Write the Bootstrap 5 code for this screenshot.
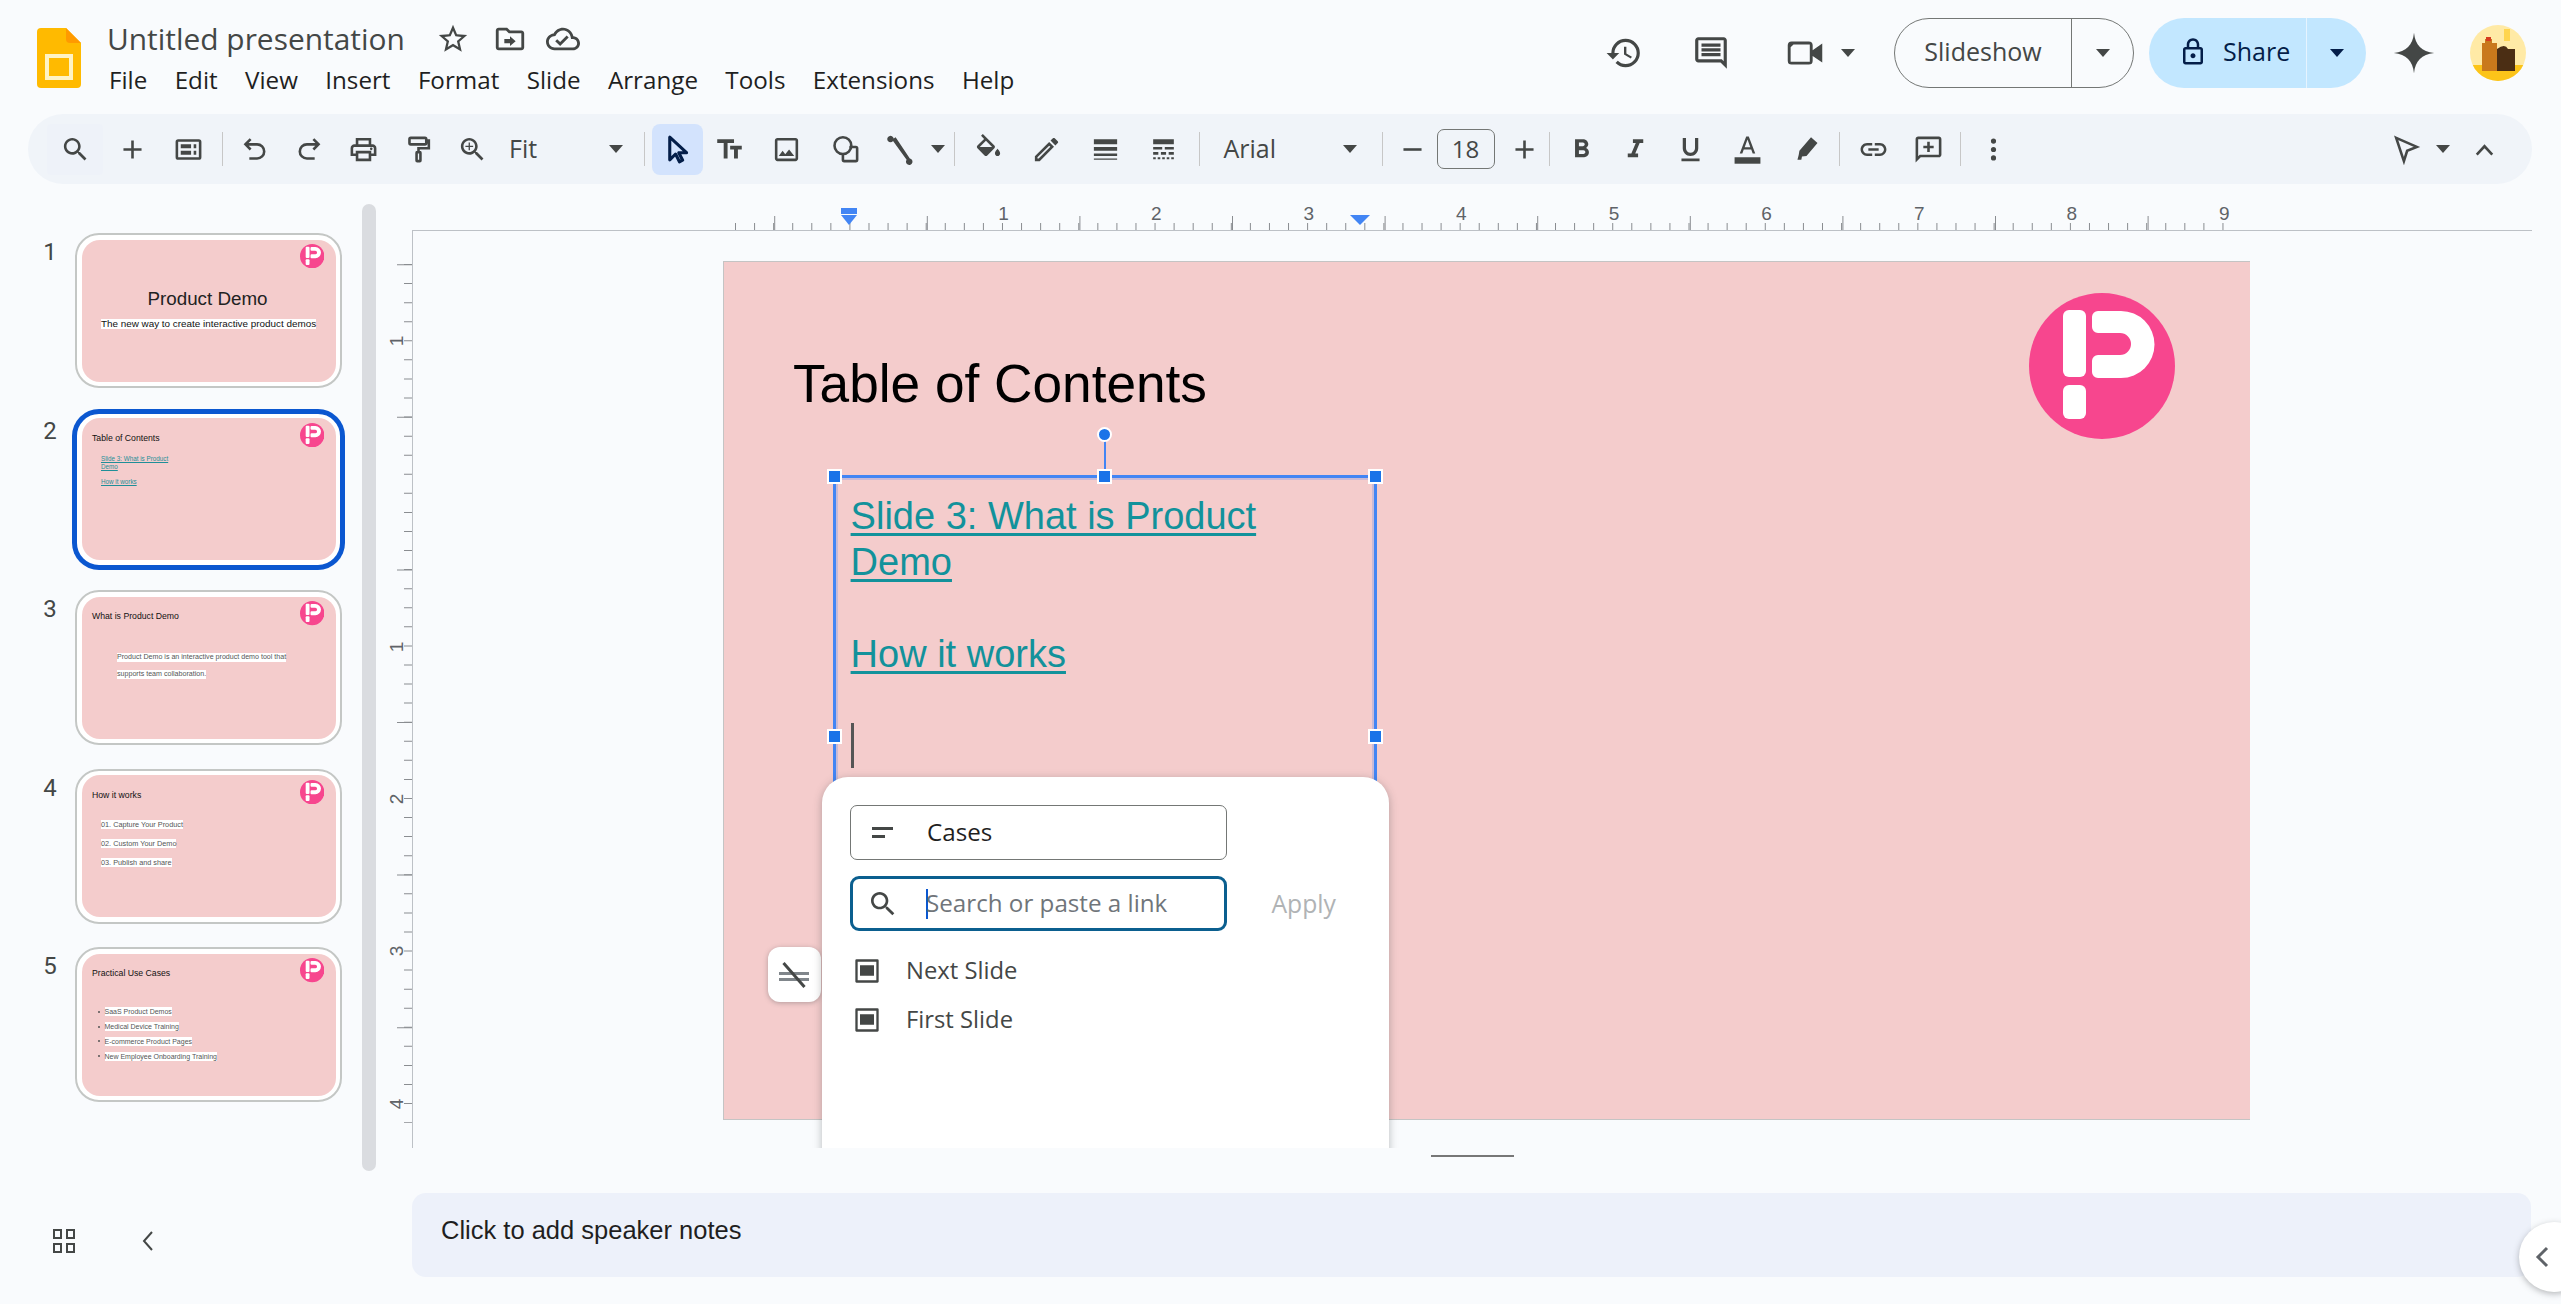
<!DOCTYPE html>
<html lang="en">
<head>
<meta charset="utf-8">
<title>Untitled presentation</title>
<link href="https://cdn.jsdelivr.net/npm/bootstrap@5.3.0/dist/css/bootstrap.min.css" rel="stylesheet">
<style>
html,body{margin:0;height:1306px;width:2561px;overflow:hidden;background:#fff;}
body{font-family:"Open Sans",Roboto,sans-serif;color:#1f1f1f;}
.app{width:2561px;height:1304px;background:#f9fbfd;overflow:hidden;}
svg{display:block;flex-shrink:0;}
.ic{fill:#444746;}

/* header */
.hdr{height:114px;padding:0 35px 0 37px;}
.doc-logo{width:44px;height:60px;margin-top:28px;}
.titles{margin-left:26px;padding-top:20px;}
.doc-title{font-size:29.9px;line-height:38px;color:#444746;width:328.5px;white-space:nowrap;}
.title-row .i-star{margin-right:23px;}
.title-row .i-fold{margin-right:19px;}
.menu{font-size:24.2px;line-height:32px;margin-top:6px;gap:27.4px;margin-left:2px;}
.hdr-r{padding-top:18px;}
.hbox{height:70px;}
.hicon{width:38px;height:38px;fill:#444746;}
.h-hist{margin-right:48.6px;}
.h-comm{margin-right:52px;}
.h-cam{width:46px;height:46px;margin-right:13px;}
.caret{width:14px;height:8px;fill:#444746;}
.caret-d{fill:#041e49;}
.slideshow{height:70px;width:240px;margin-left:39px;border:1.5px solid #747775;border-radius:35px;}
.slideshow .lbl{width:177px;height:100%;padding:0 0 3px;border:0;border-right:1.5px solid #747775;border-radius:0;font-size:25px;color:#444746;}
.slideshow .drop{flex:1;}
.share{height:70px;width:217px;margin-left:15px;background:#c2e7ff;border-radius:35px;}
.share .lbl{width:158px;height:100%;border:0;border-right:1.5px solid #e6f4ff;border-radius:0;padding:0 0 3px 29px;gap:15px;font-size:25px;color:#041e49;}
.share .drop{flex:1;}
.gem{width:44px;height:44px;margin-left:26px;fill:#444746;}
.avatar{width:56px;height:56px;margin-left:34px;border-radius:50%;overflow:hidden;}

/* toolbar */
.tbar{height:70px;margin:0 29px 0 28px;background:#f0f4f9;border-radius:35px;padding:0 24px 0 19px;}
.tb{height:51px;flex-shrink:0;}
.tb svg{width:31px;height:31px;fill:#444746;}
.tb svg.caret{width:14px;height:8px;}
.tb svg.line-ic{fill:none;stroke:#444746;stroke-width:2;}
.w26{width:26px}.w34{width:34px}.w40{width:40px}.w44{width:44px}.w48{width:48px}.w50{width:50px}.w51{width:51px}.w54{width:54px}.w54h{width:54.5px}.w56{width:56px}.w58{width:58px}.w60{width:60px}.w62{width:62px}
.tb-hov{background:#eef2f9;border-radius:4px;}
.tb-act{background:#d3e3fd;border-radius:8px;}
.tb-act svg{fill:none;stroke:#041e49;stroke-width:2.4;stroke-linejoin:round;}
.sep{width:1px;height:34px;background:#c7c7c7;flex-shrink:0;}
.m-a{margin:0 4.75px 0 6.75px;}
.m-b{margin:0 7px 0 6px;}
.m-c{margin:0 7px 0 3px;}
.m-d{margin:0 5px 0 5px;}
.m-e{margin:0 5.5px 0 5.5px;}
.m-f{margin:0 5px 0 2px;}
.m-g{margin:0 5px 0 2.5px;}
.m-h{margin:0 5px 0 4.5px;}
.tsel{height:51px;font-size:25px;color:#444746;flex-shrink:0;}
.tsel-fit{width:137.5px;padding:0 15px 0 9px;}
.tsel-font{width:172px;padding:0 20px 0 19px;}
.fsize{width:58px;height:40px;border:1.5px solid #747775;border-radius:7px;font-size:24px;color:#444746;flex-shrink:0;margin-right:8px;}

/* body columns */
.cols{height:1120px;}
.film{width:412px;flex-shrink:0;}
.film-top{height:987px;}
.strip{width:362px;padding-top:49px;}
.slide-row{height:178.6px;}
.num{width:75px;font-size:24px;line-height:30px;color:#444746;text-align:center;padding:4px 0 0 25px;flex-shrink:0;font-family:Roboto,sans-serif;}
.thumb{width:267px;height:155px;background:#fff;border:2px solid #c4c7c5;border-radius:24px;padding:4.5px;flex-shrink:0;}
.thumb.on{border-color:#0b57d0;box-shadow:0 0 0 3px #0b57d0;}
.mini{width:254px;height:142px;background:#f4cccc;border-radius:18px;overflow:hidden;font-family:"Liberation Sans",Arial,sans-serif;color:#111;}
.mini-logo{width:24.4px;height:24.4px;top:4.5px;right:11.5px;}
.m-title{font-size:8.7px;line-height:12px;}
.hl{background:#fff;color:#555;font-size:7.1px;line-height:9px;}
.mt1{padding-top:48px;text-align:center;}
.mt1 .big{font-size:18.8px;line-height:22px;color:#222;margin-right:2px;}
.mt1 .sub{font-size:9.9px;line-height:10.5px;background:#fff;color:#111;margin-top:9px;display:inline-block;}
.mt2{padding:13.5px 0 0 10.5px;}
.mt2 .links{padding:11px 0 0 9px;font-size:6.3px;line-height:8px;}
.mt2 .links a{color:#1e8f98;}
.mt2 .links p{margin:0 0 7px;}
.mt3{padding:13.5px 0 0 10.5px;}
.mt3 .para{padding:31px 0 0 25px;}
.mt3 .hl{display:table;margin-bottom:7.5px;}
.mt4{padding:13.5px 0 0 10.5px;}
.mt4 .rows{padding:19px 0 0 9px;}
.mt4 .hl{display:table;margin-bottom:10.2px;font-size:7.3px;}
.mt5{padding:13.5px 0 0 10.5px;}
.mt5 ul{list-style:none;padding:25px 0 0 5.5px;margin:0;}
.mt5 li{height:14.8px;display:flex;align-items:center;gap:5px;}
.mt5 li i{display:block;width:2px;height:2px;background:#555;border-radius:50%;}
.mt5 .hl{font-size:7px;}
.sbar{width:14px;height:967px;margin-top:20px;background:#dadce0;border-radius:7px;}
.film-foot{padding:57px 0 0 52px;}
.gridi{width:24px;height:26px;fill:#444746;}
.backi{width:16px;height:26px;margin-left:64px;fill:none;stroke:#444746;stroke-width:2;}

/* workspace */
.work{width:2149px;}
.hruler{height:46px;}
.vruler{left:-32px;top:46px;}
.canvas{width:2120px;height:918px;border-top:1.5px solid #bdc1c6;border-left:1.5px solid #bdc1c6;overflow:hidden;padding:30px 0 0 310px;}
.slide{width:1526.5px;height:859px;background:#f4cccc;border:1px solid #c4c4c4;border-right:0;border-bottom:1.5px solid #c4c4c4;font-family:"Liberation Sans",Arial,sans-serif;}
.big-logo{left:1304.5px;top:31px;width:146px;height:146px;}
.sl-title{left:69px;top:92px;font-size:53.2px;line-height:60px;color:#000;white-space:nowrap;}
.tbox{left:109px;top:213px;width:543.5px;height:520px;border:3px solid #4285f4;outline:2px solid rgba(66,133,244,.25);outline-offset:-5px;padding:15px 14.6px;font-size:38px;line-height:46px;}
.tbox p{margin:0;min-height:46px;}
.tbox a{color:#12929b;text-decoration-thickness:3px;text-underline-offset:4px;}
.caret-bar{display:block;width:3px;height:45px;background:#555;}
.hd{width:15px;height:15px;background:#1a73e8;border:2px solid #fff;}
.hd-tl{left:-9px;top:-9px;}
.hd-tm{left:260.5px;top:-9px;}
.hd-tr{right:-9px;top:-9px;}
.hd-ml{left:-9px;top:251px;}
.hd-mr{right:-9px;top:251px;}
.rot{left:260.5px;top:-51px;width:15px;height:15px;border-radius:50%;background:#1a73e8;border:2px solid #fff;}
.rot-line{left:267.5px;top:-37px;width:2px;height:31px;background:#4285f4;}
.popup{left:97.5px;top:515px;width:567px;height:500px;background:#fff;border-radius:26px;box-shadow:0 2px 9px rgba(60,64,67,.35);padding:28px 0 0 28.5px;font-family:"Open Sans",Roboto,sans-serif;}
.fld{width:376.5px;height:55px;border:1px solid #747775;border-radius:7px;background:#fff;padding:0;font-size:24.2px;color:#1f1f1f;}
.fld-ic{width:62px;margin-right:14px;flex-shrink:0;}
.fld-f{border:3px solid #0b5f8f;border-radius:9px;}
.fld-f .fld-ic{width:59px;}
.fld-f .ph{color:#70757a;}
.tcaret{display:block;width:2px;height:30px;background:#0b57d0;margin-right:-2px;}
.apply{font-size:24.7px;color:#b0b3b5;margin-left:45px;}
.link-list{margin:15px 0 0 3px;}
.link-list .list-group-item{border:0;background:transparent;padding:0;height:49px;gap:25px;font-size:23.8px;color:#444746;}
.float-btn{left:43.5px;top:685px;width:53px;height:55px;background:#fff;border-radius:12px;box-shadow:0 1px 5px rgba(60,64,67,.35);}
.drag{width:83px;height:2px;background:#777;margin:7px 0 0 1019px;}
.notes{width:2119px;height:84px;margin-top:36px;background:#edf1fa;border-radius:14px;padding:0 0 10px 29px;font-family:"Liberation Sans",Arial,sans-serif;font-size:25.5px;color:#1f1f1f;}
.side-btn{left:2519px;top:1222px;width:70px;height:70px;background:#fff;border-radius:50%;box-shadow:0 2px 6px rgba(60,64,67,.35);padding-left:14px;}
</style>
</head>
<body>
<svg width="0" height="0" class="position-absolute">
  <symbol id="plogo" viewBox="0 0 146 146">
    <circle cx="73" cy="73" r="73" fill="#f7468e"/>
    <rect x="34" y="17" width="23" height="67" rx="6" fill="#fff"/>
    <rect x="34" y="92" width="23" height="34" rx="6" fill="#fff"/>
    <path fill="#fff" d="M69 18H92A33.500 33.500 0 0 1 92 85H69a6 6 0 0 1-6-6V68a6 6 0 0 1 6-6H91a11 11 0 0 0 0-22H69a6 6 0 0 1-6-6V24a6 6 0 0 1 6-6Z"/>
  </symbol>
  <symbol id="sl" viewBox="0 0 24 24"><path fill-rule="evenodd" d="M3 2h18a1 1 0 0 1 1 1v18a1 1 0 0 1-1 1H3a1 1 0 0 1-1-1V3a1 1 0 0 1 1-1Zm1 2v16h16V4Zm2 3h12v9H6Z"/></symbol>
  <symbol id="car" viewBox="0 0 14 8"><path d="M0 0h14L7 8Z"/></symbol>
  <symbol id="srch" viewBox="0 0 24 24"><path d="M15.500 14h-.79l-.28-.27C15.410 12.590 16 11.110 16 9.500 16 5.910 13.090 3 9.500 3S3 5.910 3 9.500 5.910 16 9.500 16c1.610 0 3.090-.59 4.230-1.570l.27.28v.79l5 4.990L20.490 19l-4.990-5zm-6 0C7.010 14 5 11.990 5 9.500S7.010 5 9.500 5 14 7.010 14 9.500 11.990 14 9.500 14z"/></symbol>
</svg>
<div class="app position-relative">
  <!-- header -->
  <header class="hdr d-flex">
    <svg class="doc-logo" viewBox="0 0 44 60"><path d="M4 0H29L44 15V56a4 4 0 0 1-4 4H4a4 4 0 0 1-4-4V4a4 4 0 0 1 4-4Z" fill="#ffba00"/><path d="M29 0 44 15H33a4 4 0 0 1-4-4Z" fill="#ff9a00"/><path fill-rule="evenodd" d="M8 26H36V52H8Zm4 4V48H32V30Z" fill="#fff3c4"/></svg>
    <div class="titles">
      <div class="title-row d-flex align-items-center">
        <div class="doc-title">Untitled presentation</div>
        <svg class="i-star ic" width="34" height="34" viewBox="0 0 24 24"><path d="M22 9.240l-7.190-.62L12 2 9.190 8.630 2 9.240l5.460 4.730L5.820 21 12 17.270 18.180 21l-1.630-7.030L22 9.240zM12 15.400l-3.760 2.270 1-4.280-3.320-2.880 4.380-.38L12 6.100l1.710 4.040 4.380.38-3.320 2.880 1 4.280L12 15.400z"/></svg>
        <svg class="i-fold ic" width="34" height="34" viewBox="0 0 24 24"><path d="M20 6h-8l-2-2H4c-1.100 0-2 .9-2 2v12c0 1.100.9 2 2 2h16c1.100 0 2-.9 2-2V8c0-1.100-.9-2-2-2zm0 12H4V6h5.170l2 2H20v10zm-8-1 4-3.500-4-3.500v2H8v3h4z"/></svg>
        <svg class="ic" width="34" height="34" viewBox="0 0 24 24"><path d="M19.350 10.040C18.670 6.590 15.640 4 12 4 9.110 4 6.600 5.640 5.350 8.040 2.340 8.360 0 10.910 0 14c0 3.310 2.690 6 6 6h13c2.760 0 5-2.240 5-5 0-2.640-2.050-4.780-4.650-4.960zM19 18H6c-2.210 0-4-1.790-4-4 0-2.050 1.530-3.760 3.560-3.970l1.070-.11.500-.95C8.080 7.140 9.940 6 12 6c2.620 0 4.880 1.860 5.390 4.430l.30 1.500 1.530.11c1.560.10 2.780 1.410 2.780 2.960 0 1.650-1.350 3-3 3zm-9-3.820l-2.090-2.090L6.500 13.500 10 17l6.010-6.010-1.410-1.410z"/></svg>
      </div>
      <nav class="menu d-flex"><span>File</span><span>Edit</span><span>View</span><span>Insert</span><span>Format</span><span>Slide</span><span>Arrange</span><span>Tools</span><span>Extensions</span><span>Help</span></nav>
    </div>
    <div class="hdr-r ms-auto d-flex align-items-start">
      <div class="hbox d-flex align-items-center">
        <svg class="hicon h-hist" viewBox="0 0 24 24"><path d="M13 3a9 9 0 0 0-9 9H1l3.890 3.890.07.14L9 12H6c0-3.870 3.130-7 7-7s7 3.130 7 7-3.130 7-7 7c-1.930 0-3.680-.79-4.940-2.060l-1.420 1.420A8.954 8.954 0 0 0 13 21a9 9 0 0 0 0-18zm-1 5v5l4.280 2.540.72-1.210-3.500-2.080V8H12z"/></svg>
        <svg class="hicon h-comm" viewBox="0 0 24 24"><path d="M21.990 4c0-1.100-.89-2-1.990-2H4c-1.100 0-2 .9-2 2v12c0 1.100.9 2 2 2h14l4 4-.01-18zM20 4v13.170L18.830 16H4V4h16zM6 12h12v2H6zm0-3h12v2H6zm0-3h12v2H6z"/></svg>
        <svg class="hicon h-cam" viewBox="0 0 24 24"><path d="M5 6h9a2 2 0 0 1 2 2v2.500L21 7v10l-5-3.500V16a2 2 0 0 1-2 2H5a2 2 0 0 1-2-2V8a2 2 0 0 1 2-2Zm1 1.500L4.500 9v7.500H14.500V7.500Z" fill-rule="evenodd"/></svg>
        <svg class="caret"><use href="#car"/></svg>
      </div>
      <div class="slideshow d-flex">
        <button class="btn lbl">Slideshow</button>
        <span class="drop d-flex align-items-center justify-content-center"><svg class="caret"><use href="#car"/></svg></span>
      </div>
      <div class="share d-flex">
        <button class="btn lbl d-flex align-items-center">
          <svg width="30" height="30" viewBox="0 0 24 24" fill="#041e49"><path d="M18 8h-1V6c0-2.760-2.240-5-5-5S7 3.240 7 6v2H6c-1.100 0-2 .9-2 2v10c0 1.100.9 2 2 2h12c1.100 0 2-.9 2-2V10c0-1.100-.9-2-2-2zM9 6c0-1.660 1.340-3 3-3s3 1.340 3 3v2H9V6zm9 14H6V10h12v10zm-6-3c1.100 0 2-.9 2-2s-.9-2-2-2-2 .9-2 2 .9 2 2 2z"/></svg>
          Share
        </button>
        <span class="drop d-flex align-items-center justify-content-center"><svg class="caret caret-d"><use href="#car"/></svg></span>
      </div>
      <div class="hbox d-flex align-items-center">
        <svg class="gem" viewBox="0 0 24 24"><path d="M12 1C12.700 7.800 16.200 11.300 23 12 16.200 12.700 12.700 16.200 12 23 11.300 16.200 7.800 12.700 1 12 7.800 11.300 11.300 7.800 12 1Z"/></svg>
        <svg class="avatar" viewBox="0 0 56 56"><rect width="56" height="56" fill="#ffeaa6"/><rect y="40" width="56" height="16" fill="#fcc419"/><rect x="34" y="4" width="6" height="12" fill="#ffd54f"/><path d="M12 46V18h3v-4h7v4h5V46Z" fill="#c9791c"/><path d="M27 46V24q8-6 11 0h7v22Z" fill="#4b2e14"/><rect x="16" y="12" width="5" height="4" fill="#d63b1f"/></svg>
      </div>
    </div>
  </header>

  <!-- toolbar -->
  <div class="tbar d-flex align-items-center">
    <span class="tb w56 tb-hov d-flex align-items-center justify-content-center"><svg viewBox="0 0 24 24"><use href="#srch"/></svg></span>
    <span class="tb w58 d-flex align-items-center justify-content-center"><svg viewBox="0 0 24 24"><path d="M19 13h-6v6h-2v-6H5v-2h6V5h2v6h6v2z"/></svg></span>
    <span class="tb w54 d-flex align-items-center justify-content-center"><svg viewBox="0 0 24 24"><path fill-rule="evenodd" d="M4 4h16a2 2 0 0 1 2 2v12a2 2 0 0 1-2 2H4a2 2 0 0 1-2-2V6a2 2 0 0 1 2-2Zm0 2v12h16V6Zm2 2h8v3H6Zm0 5h8v3H6Zm10-5h2v3h-2Zm0 5h2v3h-2Z"/></svg></span>
    <span class="sep m-a"></span>
    <span class="tb w54h d-flex align-items-center justify-content-center"><svg class="line-ic" viewBox="0 0 24 24"><path d="M9 4 5 8l4 4M5 8h9a5.500 5.500 0 0 1 0 11H8"/></svg></span>
    <span class="tb w54h d-flex align-items-center justify-content-center"><svg class="line-ic" viewBox="0 0 24 24"><path d="m15 4 4 4-4 4M19 8h-9a5.500 5.500 0 0 0 0 11h6"/></svg></span>
    <span class="tb w54h d-flex align-items-center justify-content-center"><svg viewBox="0 0 24 24"><path d="M19 8h-1V3H6v5H5c-1.660 0-3 1.340-3 3v6h4v4h12v-4h4v-6c0-1.660-1.340-3-3-3zM8 5h8v3H8V5zm8 12v2H8v-4h8v2zm2-2v-2H6v2H4v-4c0-.55.45-1 1-1h14c.55 0 1 .45 1 1v4h-2z"/><circle cx="18" cy="11.500" r="1"/></svg></span>
    <span class="tb w54h d-flex align-items-center justify-content-center"><svg class="line-ic" viewBox="0 0 24 24"><path d="M6 3h11a1 1 0 0 1 1 1v3a1 1 0 0 1-1 1H6a1 1 0 0 1-1-1V4a1 1 0 0 1 1-1Zm12 2h2v6h-8v3M11 14h2a.5.5 0 0 1 .5.5v6a.5.5 0 0 1-.5.5h-2a.5.5 0 0 1-.5-.5v-6a.5.5 0 0 1 .5-.5Z"/></svg></span>
    <span class="tb w54h d-flex align-items-center justify-content-center"><svg viewBox="0 0 24 24"><use href="#srch"/><path d="M12.500 10H10v2.500H9V10H6.500V9H9V6.500h1V9h2.500z"/></svg></span>
    <span class="tsel tsel-fit d-flex align-items-center justify-content-between"><span>Fit</span><svg class="caret"><use href="#car"/></svg></span>
    <span class="sep m-b"></span>
    <span class="tb w51 tb-act d-flex align-items-center justify-content-center"><svg viewBox="0 0 24 24"><path d="M6 2.500V20L10.500 15.500 13.500 21.500 16 20.300 13 14.500H19Z"/></svg></span>
    <span class="tb w54 d-flex align-items-center justify-content-center"><svg viewBox="0 0 24 24"><path d="M2.500 4v3h5v12h3V7h5V4h-13zm19 5h-9v3h3v7h3v-7h3V9z"/></svg></span>
    <span class="tb w60 d-flex align-items-center justify-content-center"><svg viewBox="0 0 24 24"><path d="M19 3H5c-1.100 0-2 .9-2 2v14c0 1.100.9 2 2 2h14c1.100 0 2-.9 2-2V5c0-1.100-.9-2-2-2zm0 16H5V5h14v14zm-5-7-3 3.720L9 13l-3 4h12l-4-5z"/></svg></span>
    <span class="tb w58 d-flex align-items-center justify-content-center"><svg class="line-ic" viewBox="0 0 24 24"><circle cx="10" cy="9" r="6.500"/><path d="M15 10h5a1 1 0 0 1 1 1v9a1 1 0 0 1-1 1h-9a1 1 0 0 1-1-1v-5"/></svg></span>
    <span class="tb w50 d-flex align-items-center justify-content-center"><svg viewBox="0 0 24 24"><path d="m7.500 3.500 1.500-1L20 19a2.500 2.500 0 1 1-2.500 1L7 5.500a2.500 2.500 0 1 1 .5-2Z"/></svg></span>
    <span class="tb w26 d-flex align-items-center justify-content-center"><svg class="caret"><use href="#car"/></svg></span>
    <span class="sep m-c"></span>
    <span class="tb w54 d-flex align-items-center justify-content-center"><svg viewBox="0 0 24 24"><path d="M16.560 8.940 7.620 0 6.210 1.410l2.380 2.380-5.150 5.150c-.59.59-.59 1.540 0 2.120l5.500 5.500c.29.29.68.44 1.060.44s.77-.15 1.060-.44l5.500-5.500c.59-.58.59-1.530 0-2.120zM5.210 10 10 5.210 14.790 10H5.210zM19 11.500s-2 2.170-2 3.500c0 1.100.9 2 2 2s2-.9 2-2c0-1.330-2-3.500-2-3.500z"/></svg></span>
    <span class="tb w62 d-flex align-items-center justify-content-center"><svg viewBox="0 0 24 24"><path d="M14.060 9.020l.92.92L5.920 19H5v-.92l9.060-9.060M17.660 3c-.25 0-.51.1-.7.29l-1.830 1.830 3.750 3.750 1.830-1.830c.39-.39.39-1.020 0-1.410l-2.340-2.340c-.2-.2-.45-.29-.71-.29zm-3.600 3.190L3 17.250V21h3.750L17.810 9.940l-3.750-3.750z"/></svg></span>
    <span class="tb w56 d-flex align-items-center justify-content-center"><svg viewBox="0 0 24 24"><path d="M3 17h18v-2H3v2zm0 3h18v-1H3v1zm0-7h18v-3H3v3zm0-9v4h18V4H3z"/></svg></span>
    <span class="tb w60 d-flex align-items-center justify-content-center"><svg viewBox="0 0 24 24"><path d="M4 4h16v4H4Zm0 6h7v2H4Zm9 0h7v2h-7ZM4 14h4v2H4Zm6 0h4v2h-4Zm6 0h4v2h-4ZM4 18h2v1.500H4Zm3.500 0h2v1.500h-2Zm3.500 0h2v1.500h-2Zm3.500 0h2v1.500h-2Zm3.500 0h2v1.500h-2Z"/></svg></span>
    <span class="sep m-d"></span>
    <span class="tsel tsel-font d-flex align-items-center justify-content-between"><span>Arial</span><svg class="caret"><use href="#car"/></svg></span>
    <span class="sep m-e"></span>
    <span class="tb w48 d-flex align-items-center justify-content-center"><svg viewBox="0 0 24 24"><path d="M19 13H5v-2h14v2z"/></svg></span>
    <span class="fsize d-flex align-items-center justify-content-center">18</span>
    <span class="tb w44 d-flex align-items-center justify-content-center"><svg viewBox="0 0 24 24"><path d="M19 13h-6v6h-2v-6H5v-2h6V5h2v6h6v2z"/></svg></span>
    <span class="sep m-f"></span>
    <span class="tb w54 d-flex align-items-center justify-content-center"><svg viewBox="0 0 24 24"><path d="M15.600 10.790c.97-.67 1.650-1.770 1.650-2.790 0-2.260-1.750-4-4-4H7v14h7.040c2.090 0 3.710-1.700 3.710-3.790 0-1.520-.86-2.820-2.150-3.420zM10 6.500h3c.83 0 1.500.67 1.500 1.500s-.67 1.500-1.500 1.500h-3v-3zm3.500 9H10v-3h3.500c.83 0 1.500.67 1.500 1.500s-.67 1.500-1.500 1.500z"/></svg></span>
    <span class="tb w54 d-flex align-items-center justify-content-center"><svg viewBox="0 0 24 24"><path d="M10 4v3h2.210l-3.420 8H6v3h8v-3h-2.210l3.420-8H18V4z"/></svg></span>
    <span class="tb w56 d-flex align-items-center justify-content-center"><svg viewBox="0 0 24 24"><path d="M12 17c3.310 0 6-2.690 6-6V3h-2.500v8c0 1.930-1.570 3.500-3.500 3.500S8.500 12.930 8.500 11V3H6v8c0 3.310 2.690 6 6 6zm-7 2v2h14v-2H5z"/></svg></span>
    <span class="tb w58 d-flex align-items-center justify-content-center"><svg viewBox="0 0 24 24"><path d="M11 2 6 15h2l1.100-3h5.800l1.100 3h2L13 2h-2zm-1.200 8.200L12 4.200l2.200 6H9.800z"/><rect x="2" y="18" width="20" height="5"/></svg></span>
    <span class="tb w60 d-flex align-items-center justify-content-center"><svg viewBox="0 0 24 24"><path d="M15.500 2.500 20.500 7 12 17l-3.500.5L8 20H5l1-4 .5-3Z"/></svg></span>
    <span class="sep m-g"></span>
    <span class="tb w56 d-flex align-items-center justify-content-center"><svg viewBox="0 0 24 24"><path d="M3.900 12c0-1.710 1.390-3.100 3.100-3.100h4V7H7c-2.760 0-5 2.240-5 5s2.240 5 5 5h4v-1.900H7c-1.710 0-3.100-1.390-3.100-3.100zM8 13h8v-2H8v2zm9-6h-4v1.900h4c1.710 0 3.100 1.390 3.100 3.100s-1.390 3.100-3.100 3.100h-4V17h4c2.760 0 5-2.240 5-5s-2.240-5-5-5z"/></svg></span>
    <span class="tb w54 d-flex align-items-center justify-content-center"><svg viewBox="0 0 24 24"><path d="M20 2H4c-1.100 0-2 .9-2 2v18l4-4h14c1.100 0 2-.9 2-2V4c0-1.100-.9-2-2-2zm0 14H5.170L4 17.170V4h16v12z"/><path d="M13 6h-2v3H8v2h3v3h2v-3h3V9h-3z"/></svg></span>
    <span class="sep m-h"></span>
    <span class="tb w56 d-flex align-items-center justify-content-center"><svg viewBox="0 0 24 24"><circle cx="12" cy="5.500" r="2"/><circle cx="12" cy="12" r="2"/><circle cx="12" cy="18.500" r="2"/></svg></span>
    <span class="tb w40 ms-auto d-flex align-items-center justify-content-center"><svg class="line-ic" viewBox="0 0 24 24"><path d="M4 3 20 10 12.500 13 10 21Z"/></svg></span>
    <span class="tb w34 d-flex align-items-center justify-content-center"><svg class="caret"><use href="#car"/></svg></span>
    <span class="tb w48 d-flex align-items-center justify-content-center"><svg class="line-ic" viewBox="0 0 24 24"><path d="M6 16 12 9.500 18 16"/></svg></span>
  </div>

  <div class="cols d-flex">
    <!-- filmstrip -->
    <aside class="film">
      <div class="film-top d-flex">
        <div class="strip">
          <div class="slide-row d-flex">
            <div class="num">1</div>
            <div class="thumb"><div class="mini position-relative mt1">
              <svg class="mini-logo position-absolute"><use href="#plogo"/></svg>
              <div class="big">Product Demo</div>
              <span class="sub">The new way to create interactive product demos</span>
            </div></div>
          </div>
          <div class="slide-row d-flex">
            <div class="num">2</div>
            <div class="thumb on"><div class="mini position-relative mt2">
              <svg class="mini-logo position-absolute"><use href="#plogo"/></svg>
              <div class="m-title">Table of Contents</div>
              <div class="links"><p><a href="#">Slide 3: What is Product<br>Demo</a></p><p><a href="#">How it works</a></p></div>
            </div></div>
          </div>
          <div class="slide-row d-flex">
            <div class="num">3</div>
            <div class="thumb"><div class="mini position-relative mt3">
              <svg class="mini-logo position-absolute"><use href="#plogo"/></svg>
              <div class="m-title">What is Product Demo</div>
              <div class="para"><span class="hl">Product Demo is an interactive product demo tool that</span><span class="hl">supports team collaboration.</span></div>
            </div></div>
          </div>
          <div class="slide-row d-flex">
            <div class="num">4</div>
            <div class="thumb"><div class="mini position-relative mt4">
              <svg class="mini-logo position-absolute"><use href="#plogo"/></svg>
              <div class="m-title">How it works</div>
              <div class="rows"><span class="hl">01. Capture Your Product</span><span class="hl">02. Custom Your Demo</span><span class="hl">03. Publish and share</span></div>
            </div></div>
          </div>
          <div class="slide-row d-flex">
            <div class="num">5</div>
            <div class="thumb"><div class="mini position-relative mt5">
              <svg class="mini-logo position-absolute"><use href="#plogo"/></svg>
              <div class="m-title">Practical Use Cases</div>
              <ul><li><i></i><span class="hl">SaaS Product Demos</span></li><li><i></i><span class="hl">Medical Device Training</span></li><li><i></i><span class="hl">E-commerce Product Pages</span></li><li><i></i><span class="hl">New Employee Onboarding Training</span></li></ul>
            </div></div>
          </div>
        </div>
        <div class="sbar"></div>
      </div>
      <div class="film-foot d-flex align-items-center">
        <svg class="gridi" viewBox="0 0 24 26"><path fill-rule="evenodd" d="M1 1h9v10H1Zm2 2v6h5V3Zm11-2h9v10h-9Zm2 2v6h5V3ZM1 15h9v10H1Zm2 2v6h5v-6Zm11-2h9v10h-9Zm2 2v6h5v-6Z"/></svg>
        <svg class="backi" viewBox="0 0 16 26"><path d="M12 4 4 13l8 9"/></svg>
      </div>
    </aside>

    <!-- workspace -->
    <section class="work position-relative">
      <div class="hruler">
        <svg width="2149" height="46" viewBox="0 0 2149 46" font-family="Liberation Sans, Arial, sans-serif" font-size="19" fill="#5f6368" text-anchor="middle">
          <line x1="323" y1="42.500" x2="1829" y2="42.500" stroke="#8a8d91" stroke-width="7" stroke-dasharray="1 18.070"/>
          <line x1="362.200" y1="39" x2="1829" y2="39" stroke="#8a8d91" stroke-width="14" stroke-dasharray="1 151.600"/>
          <text x="591.600" y="36">1</text><text x="744.200" y="36">2</text><text x="896.800" y="36">3</text><text x="1049.400" y="36">4</text><text x="1202" y="36">5</text><text x="1354.600" y="36">6</text><text x="1507.200" y="36">7</text><text x="1659.800" y="36">8</text><text x="1812.400" y="36">9</text>
          <path d="M429 24h16v6h-16Z" fill="#4285f4"/><path d="M429 31h16l-8 10Z" fill="#4285f4"/>
          <path d="M938 31h20l-10 10Z" fill="#4285f4"/>
        </svg>
      </div>
      <svg class="vruler position-absolute" width="32" height="918" viewBox="0 0 32 918" font-family="Liberation Sans, Arial, sans-serif" font-size="19" fill="#5f6368" text-anchor="middle">
        <line x1="28" y1="34" x2="28" y2="893" stroke="#8a8d91" stroke-width="8" stroke-dasharray="1 18.070"/>
        <line x1="24.500" y1="34.200" x2="24.500" y2="893" stroke="#8a8d91" stroke-width="15" stroke-dasharray="1 151.600"/>
        <text transform="translate(22.500 111) rotate(-90)">1</text><text transform="translate(22.500 417) rotate(-90)">1</text><text transform="translate(22.500 569) rotate(-90)">2</text><text transform="translate(22.500 721) rotate(-90)">3</text><text transform="translate(22.500 874) rotate(-90)">4</text>
      </svg>
      <div class="canvas">
        <div class="slide position-relative">
          <svg class="big-logo position-absolute"><use href="#plogo"/></svg>
          <div class="sl-title position-absolute">Table of Contents</div>
          <div class="tbox position-absolute">
            <span class="rot-line position-absolute"></span>
            <span class="rot position-absolute"></span>
            <span class="hd hd-tl position-absolute"></span>
            <span class="hd hd-tm position-absolute"></span>
            <span class="hd hd-tr position-absolute"></span>
            <span class="hd hd-ml position-absolute"></span>
            <span class="hd hd-mr position-absolute"></span>
            <p><a href="#">Slide 3: What is Product Demo</a></p>
            <p></p>
            <p><a href="#">How it works</a></p>
            <p></p>
            <p><span class="caret-bar"></span></p>
          </div>
          <div class="float-btn position-absolute d-flex align-items-center justify-content-center">
            <svg width="36" height="36" viewBox="0 0 24 24"><path d="M2 10h20v2H2Zm0 4h20v2H2Z" fill="#80868b"/><path d="M5 4 19 20" stroke="#444746" stroke-width="2" fill="none"/></svg>
          </div>
          <div class="popup position-absolute">
            <div class="fld d-flex align-items-center">
              <span class="fld-ic d-flex justify-content-center"><svg width="24" height="16" viewBox="0 0 24 16" fill="#444746"><path d="M2 2h21v3H2Zm0 8h13v3H2Z"/></svg></span>
              <span>Cases</span>
            </div>
            <div class="d-flex align-items-center mt-3">
              <div class="fld fld-f d-flex align-items-center">
                <span class="fld-ic d-flex justify-content-center"><svg width="32" height="32" viewBox="0 0 24 24" fill="#444746"><use href="#srch"/></svg></span>
                <span class="tcaret"></span><span class="ph">Search or paste a link</span>
              </div>
              <span class="apply">Apply</span>
            </div>
            <div class="list-group link-list">
              <div class="list-group-item d-flex align-items-center"><svg width="28" height="28" viewBox="0 0 24 24" fill="#444746"><use href="#sl"/></svg><span>Next Slide</span></div>
              <div class="list-group-item d-flex align-items-center"><svg width="28" height="28" viewBox="0 0 24 24" fill="#444746"><use href="#sl"/></svg><span>First Slide</span></div>
            </div>
          </div>
        </div>
      </div>
      <div class="drag"></div>
      <div class="notes d-flex align-items-center">Click to add speaker notes</div>
    </section>
  </div>

  <div class="side-btn position-absolute d-flex align-items-center">
    <svg width="20" height="26" viewBox="0 0 20 26" fill="none" stroke="#5f6368" stroke-width="3"><path d="M14 4 5 13l9 9"/></svg>
  </div>
</div>
<script src="https://cdn.jsdelivr.net/npm/bootstrap@5.3.0/dist/js/bootstrap.bundle.min.js"></script>
</body>
</html>
